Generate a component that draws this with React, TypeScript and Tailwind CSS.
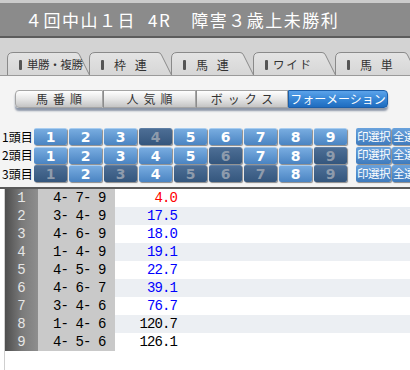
import React from 'react';

const jp = { fontFamily: '"Noto Sans CJK JP", "Noto Sans", sans-serif' };
const mono = { fontFamily: '"Liberation Mono", "DejaVu Sans Mono", monospace' };

const tabs = ['単勝・複勝', '枠 連', '馬 連', 'ワ イ ド', '馬 単'];

const sorts = [
    { label: '馬番順', w: 'w-[88px]' },
    { label: '人気順', w: 'w-[93px]' },
    { label: 'ボックス', w: 'w-[92px]' },
];

// true = selected (light blue), false = off (dark)
const picks = [
    [true, true, true, false, true, true, true, true, true],
    [true, true, true, true, true, false, true, true, false],
    [false, true, false, true, false, false, false, true, false],
];

const results = [
    { combo: '4- 7- 9', odds: '4.0', color: 'text-[#ff0000]' },
    { combo: '3- 4- 9', odds: '17.5', color: 'text-[#0000ff]' },
    { combo: '4- 6- 9', odds: '18.0', color: 'text-[#0000ff]' },
    { combo: '1- 4- 9', odds: '19.1', color: 'text-[#0000ff]' },
    { combo: '4- 5- 9', odds: '22.7', color: 'text-[#0000ff]' },
    { combo: '4- 6- 7', odds: '39.1', color: 'text-[#0000ff]' },
    { combo: '3- 4- 6', odds: '76.7', color: 'text-[#0000ff]' },
    { combo: '1- 4- 6', odds: '120.7', color: 'text-black' },
    { combo: '4- 5- 6', odds: '126.1', color: 'text-black' },
];

function Tab({ label }: { label: string }) {
    return (
        <div className="relative h-[23px] w-[83px] shrink-0">
            <svg className="absolute inset-0" width="83" height="23" viewBox="0 0 83 23">
                <defs>
                    <linearGradient id="tabg" x1="0" y1="0" x2="0" y2="1">
                        <stop offset="0" stopColor="#e4e4e4" />
                        <stop offset="1" stopColor="#d6d6d6" />
                    </linearGradient>
                </defs>
                <path d="M0.5,23 V6 Q0.5,0.5 6,0.5 H69 Q71.5,0.5 72.5,3 L82.5,23" fill="url(#tabg)" stroke="#8a8a8a" />
            </svg>
            <div className="relative flex h-full items-center pl-[12px] pt-[2px] text-[12px] text-[#333]" style={jp}>
                <span className="mr-[5px] h-[10px] w-[3px] rounded-[1px] bg-[#555]" />
                <span className={label.length > 4 ? 'whitespace-nowrap text-[11.5px] tracking-[-0.4px]' : 'ml-[5px] whitespace-pre tracking-[3px]'}>{label}</span>
            </div>
        </div>
    );
}

function NumBtn({ n, on }: { n: number; on: boolean }) {
    return (
        <div
            className={
                on
                    ? 'flex h-[17px] w-[33px] items-center justify-center rounded-[2px] border-t border-[#a9cdf0] bg-gradient-to-b from-[#78ace0] to-[#4a84c2] text-[14px] font-bold leading-none text-white shadow-[1px_1px_1px_#8a8a8a]'
                    : 'flex h-[17px] w-[33px] items-center justify-center rounded-[2px] border-t border-[#5f7fa5] bg-gradient-to-b from-[#4d6e95] to-[#34567d] text-[14px] font-bold leading-none text-[#8e9bac] shadow-[1px_1px_1px_#8a8a8a]'
            }
            style={{ fontFamily: '"DejaVu Sans", sans-serif' }}
        >
            {n}
        </div>
    );
}

function SmallBtn({ label }: { label: string }) {
    return (
        <div
            className="flex h-[17px] w-[35px] shrink-0 items-center justify-start overflow-hidden whitespace-nowrap rounded-[2px] bg-gradient-to-b from-[#6aa2dc] to-[#3f7bbd] pl-[1px] text-[11.5px] leading-none tracking-[-0.5px] text-white shadow-[1px_1px_1px_#8a8a8a]"
            style={jp}
        >
            {label}
        </div>
    );
}

export default function App() {
    return (
        <div className="h-[370px] w-[410px] overflow-hidden bg-white">
            <div className="flex h-[38px] items-center border-t-[3px] border-b-2 border-t-[#cbcbcb] border-b-[#5c5c5c] bg-[#8b8b8b] pl-[25px] text-[17px] tracking-[1.5px] text-white" style={jp}>
                <span>４回中山１日</span>
                <span className="ml-[12px]">4R</span>
                <span className="ml-[20px]">障害３歳上未勝利</span>
            </div>

            <div className="flex bg-[#d3d3d3] pl-[7px] pt-[14px]">
                {tabs.map((t, i) => (
                    <div key={t} className={i === 0 ? '' : '-ml-[1px]'}>
                        <Tab label={t} />
                    </div>
                ))}
            </div>

            <div className="border-t border-[#9a9a9a] bg-[#f4f4f4] pt-[14px]">
                <div className="ml-[15px] flex h-[18px] w-[373px] rounded-[4px] shadow-[0_3px_2px_#8d97a8]">
                    {sorts.map((s, i) => (
                        <div
                            key={s.label}
                            className={`${s.w} flex items-center justify-center whitespace-nowrap border border-[#a5a5a5] bg-gradient-to-b from-[#ffffff] via-[#e6e6e6] to-[#c4c4c4] pl-[5px] text-[12px] tracking-[5px] text-[#333] ${i === 0 ? 'rounded-l-[4px]' : 'border-l-[#8c8c8c]'}`}
                            style={jp}
                        >
                            {s.label}
                        </div>
                    ))}
                    <div className="flex w-[100px] items-center justify-center whitespace-nowrap rounded-r-[4px] border border-[#1c5ea8] bg-gradient-to-b from-[#5ba3ea] via-[#3686d6] to-[#1f6cbf] text-[12px] text-white" style={jp}>
                        フォーメーション
                    </div>
                </div>

                <div className="mt-[20px] flex flex-col gap-[1.5px]">
                    {picks.map((row, r) => (
                        <div key={r} className="flex h-[17px] items-center">
                            <div className="w-[34px] shrink-0 pl-[2px] text-[12px] leading-none text-black" style={jp}>
                                {r + 1}頭目
                            </div>
                            <div className="flex gap-[2px]">
                                {row.map((on, i) => (
                                    <NumBtn key={i} n={i + 1} on={on} />
                                ))}
                            </div>
                            <div className="ml-[9px] flex gap-[1px]">
                                <SmallBtn label="印選択" />
                                <SmallBtn label="全選択" />
                            </div>
                        </div>
                    ))}
                </div>
                <div className="h-[5px]" />
            </div>

            <div className="border-t-2 border-[#5a5a5a]">
                <div className="ml-[4px] border-l border-[#cfcfcf]">
                    {results.map((r, i) => (
                        <div key={i} className={`flex h-[18px] items-center ${i % 2 === 1 ? 'bg-[#eceff3]' : 'bg-white'}`}>
                            <div className="flex h-full w-[33px] items-center justify-center bg-gradient-to-r from-[#4e4e4e] via-[#7a7a7a] to-[#8e8e8e] text-[14px] text-[#e6e6e6]" style={mono}>
                                {i + 1}
                            </div>
                            <div className="flex h-full w-[77px] items-center bg-[#c9c9c9] pl-[15px] text-[14px] tracking-[-0.9px] whitespace-pre text-black" style={mono}>
                                {r.combo}
                            </div>
                            <div className={`w-[62px] text-right text-[14px] tracking-[-0.9px] ${r.color}`} style={mono}>
                                {r.odds}
                            </div>
                        </div>
                    ))}
                    <div className="h-[20px]" />
                </div>
            </div>
        </div>
    );
}
